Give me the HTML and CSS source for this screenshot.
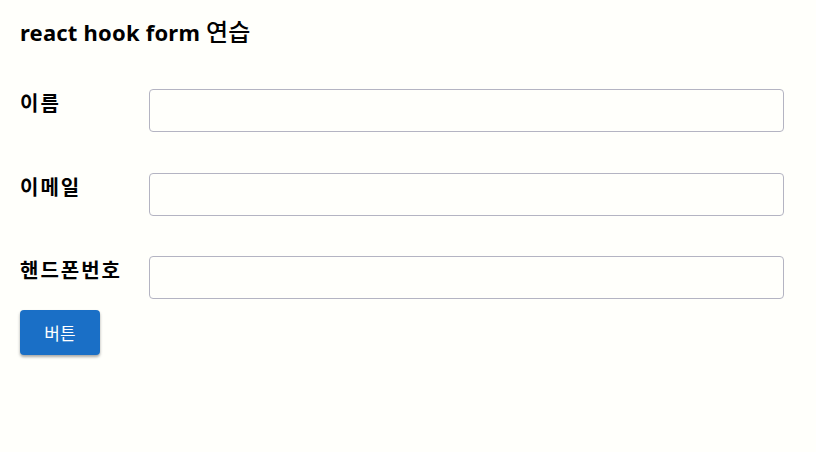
FILE: index.html
```html
<!DOCTYPE html>
<html lang="ko">
<head>
  <meta charset="UTF-8" />
  <meta name="viewport" content="width=device-width, initial-scale=1.0"/>
  <title>react hook form 연습</title>
  <link rel="stylesheet" href="styles.css">
</head>
<body>
  <div class="app">
    <h1 class="title">react hook form <span class="title-ko">연습</span></h1>
    <form class="form">
      <div class="field">
        <label for="name">이름</label>
        <input type="text" id="name" />
      </div>
      <div class="field">
        <label for="email">이메일</label>
        <input type="text" id="email" />
      </div>
      <div class="field">
        <label for="phone">핸드폰번호</label>
        <input type="text" id="phone" />
      </div>
      <button type="submit" class="submit-btn">버튼</button>
    </form>
  </div>
</body>
</html>
```

FILE: styles.css
```css
body {
  margin: 0;
  font-family: "Noto Sans", "Noto Sans CJK KR", sans-serif;
  background-color: #fffffb;
  color: #000;
}

.app {
  padding: 16px 32px 20px 20px;
}

.title {
  margin: 0 0 42px;
  font-size: 22px;
  font-weight: 700;
  line-height: 30px;
  letter-spacing: 0.2px;
}

.title-ko {
  font-family: "Noto Sans CJK KR", sans-serif;
  font-weight: 500;
  font-size: 24px;
}

.form {
  display: flex;
  flex-direction: column;
}

.field {
  display: flex;
  align-items: flex-start;
  margin-bottom: 41px;
}

.field:nth-child(2) {
  margin-bottom: 40px;
}

.field:nth-child(3) {
  margin-bottom: 11px;
}

.field label {
  width: 129px;
  flex-shrink: 0;
  padding-top: 2px;
  font-family: "Noto Sans CJK KR", sans-serif;
  font-size: 20px;
  font-weight: 700;
  line-height: 24px;
  letter-spacing: 2px;
}

.field input {
  flex: 1;
  height: 43px;
  box-sizing: border-box;
  border: 1px solid #b4b4c2;
  border-radius: 4px;
  background: transparent;
}

.submit-btn {
  align-self: flex-start;
  width: 80px;
  height: 45px;
  border: none;
  border-radius: 4px;
  background-color: #1a6fc6;
  color: #fff;
  font-family: "Noto Sans CJK KR", sans-serif;
  font-size: 17px;
  box-shadow: 0 2px 3px rgba(0, 0, 0, 0.35);
}
```
